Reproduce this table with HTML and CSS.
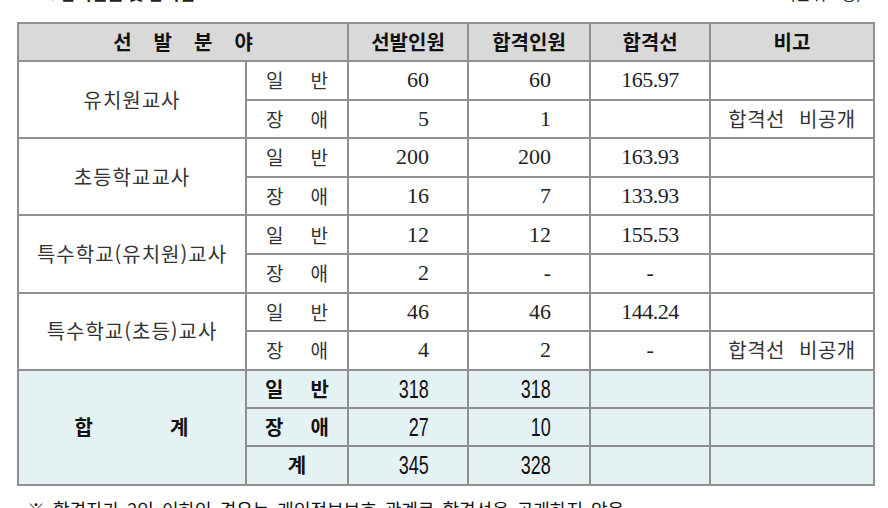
FILE: index.html
```html
<!DOCTYPE html>
<html lang="ko">
<head>
<meta charset="utf-8">
<link rel="stylesheet" href="styles.css">
</head>
<body>
<div class="caption">
  <span class="cap-title">4. 합격인원 및 합격선</span>
  <span class="cap-unit">(단위 : 명)</span>
</div>
<table class="result">
  <colgroup>
    <col class="c1"><col class="c2"><col class="c3"><col class="c4"><col class="c5"><col class="c6">
  </colgroup>
  <thead>
    <tr>
      <th colspan="2"><span class="spread4"><span>선</span><span>발</span><span>분</span><span>야</span></span></th>
      <th>선발인원</th>
      <th>합격인원</th>
      <th>합격선</th>
      <th>비고</th>
    </tr>
  </thead>
  <tbody>
    <tr>
      <td rowspan="2" class="cat">유치원교사</td>
      <td class="kind"><span class="split"><span>일</span><span>반</span></span></td>
      <td class="num">60</td><td class="num">60</td><td class="score">165.97</td><td class="note"></td>
    </tr>
    <tr>
      <td class="kind"><span class="split"><span>장</span><span>애</span></span></td>
      <td class="num">5</td><td class="num">1</td><td class="score"></td><td class="note">합격선 비공개</td>
    </tr>
    <tr>
      <td rowspan="2" class="cat">초등학교교사</td>
      <td class="kind"><span class="split"><span>일</span><span>반</span></span></td>
      <td class="num">200</td><td class="num">200</td><td class="score">163.93</td><td class="note"></td>
    </tr>
    <tr>
      <td class="kind"><span class="split"><span>장</span><span>애</span></span></td>
      <td class="num">16</td><td class="num">7</td><td class="score">133.93</td><td class="note"></td>
    </tr>
    <tr>
      <td rowspan="2" class="cat">특수학교(유치원)교사</td>
      <td class="kind"><span class="split"><span>일</span><span>반</span></span></td>
      <td class="num">12</td><td class="num">12</td><td class="score">155.53</td><td class="note"></td>
    </tr>
    <tr>
      <td class="kind"><span class="split"><span>장</span><span>애</span></span></td>
      <td class="num">2</td><td class="num dash">-</td><td class="score">-</td><td class="note"></td>
    </tr>
    <tr>
      <td rowspan="2" class="cat">특수학교(초등)교사</td>
      <td class="kind"><span class="split"><span>일</span><span>반</span></span></td>
      <td class="num">46</td><td class="num">46</td><td class="score">144.24</td><td class="note"></td>
    </tr>
    <tr>
      <td class="kind"><span class="split"><span>장</span><span>애</span></span></td>
      <td class="num">4</td><td class="num">2</td><td class="score">-</td><td class="note">합격선 비공개</td>
    </tr>
    <tr class="total">
      <td rowspan="3" class="cat"><span class="split wide"><span>합</span><span>계</span></span></td>
      <td class="kind"><span class="split"><span>일</span><span>반</span></span></td>
      <td class="num"><span class="narrow">318</span></td><td class="num"><span class="narrow">318</span></td><td></td><td></td>
    </tr>
    <tr class="total">
      <td class="kind"><span class="split"><span>장</span><span>애</span></span></td>
      <td class="num"><span class="narrow">27</span></td><td class="num"><span class="narrow">10</span></td><td></td><td></td>
    </tr>
    <tr class="total">
      <td class="kind">계</td>
      <td class="num"><span class="narrow">345</span></td><td class="num"><span class="narrow">328</span></td><td></td><td></td>
    </tr>
  </tbody>
</table>
<p class="footnote">※ 합격자가 2인 이하인 경우는 개인정보보호 관계로 합격선을 공개하지 않음</p>
</body>
</html>
```

FILE: styles.css
```css
html, body {
  margin: 0;
  padding: 0;
  background: #ffffff;
}
body {
  width: 888px;
  height: 508px;
  overflow: hidden;
  font-family: "Noto Sans CJK KR", "Noto Sans", sans-serif;
  color: #222222;
}
.caption {
  height: 22px;
  display: flex;
  justify-content: space-between;
  align-items: flex-start;
  padding: 0 26px 0 40px;
  font-size: 17px;
  font-weight: bold;
  color: #222;
  overflow: hidden;
}
.caption span {
  display: block;
  line-height: 20px;
  margin-top: -17px;
}
.cap-unit {
  font-weight: normal;
}
.result {
  margin-left: 17px;
  width: 856px;
  border-collapse: collapse;
  table-layout: fixed;
}
col.c1 { width: 228px; }
col.c2 { width: 102px; }
col.c3 { width: 120px; }
col.c4 { width: 122px; }
col.c5 { width: 120px; }
col.c6 { width: 164px; }
.result th,
.result td {
  border: 2px solid #8f8f8f;
  padding: 0;
  height: 38.6px;
  box-sizing: border-box;
  text-align: center;
  vertical-align: middle;
  line-height: 20px;
}
.result th {
  background: #d9d9d9;
  font-weight: bold;
  font-size: 20px;
  color: #111;
  height: 38px;
}
.spread4 {
  display: inline-flex;
  gap: 22px;
}
.cat {
  font-size: 20px;
  letter-spacing: 1px;
  color: #333;
}
.kind {
  font-size: 19px;
  color: #333;
}
.split {
  display: inline-flex;
  gap: 27px;
}
.split.wide {
  gap: 76px;
}
.num {
  text-align: right !important;
  padding-right: 38px !important;
  font-family: "Liberation Serif", serif;
  font-size: 22px;
  color: #222;
}
.score {
  font-family: "Liberation Serif", serif;
  font-size: 22px;
  letter-spacing: -0.5px;
  color: #222;
}
.note {
  font-size: 20px;
  letter-spacing: 0.5px;
  word-spacing: 8px;
  color: #333;
}
.total td {
  background: #e5f2f4;
  height: 38.3px;
}
.total .cat,
.total .kind {
  font-weight: bold;
  color: #111;
  font-size: 20px;
}
.total .num {
  font-family: "Liberation Sans", sans-serif;
  font-size: 25px;
  color: #111;
}
.narrow {
  display: inline-block;
  transform: scaleX(0.72);
  transform-origin: right center;
}
.footnote {
  margin: 11px 0 0 27px;
  font-size: 18px;
  line-height: 24px;
  word-spacing: 3px;
  color: #111;
  white-space: nowrap;
}
```
